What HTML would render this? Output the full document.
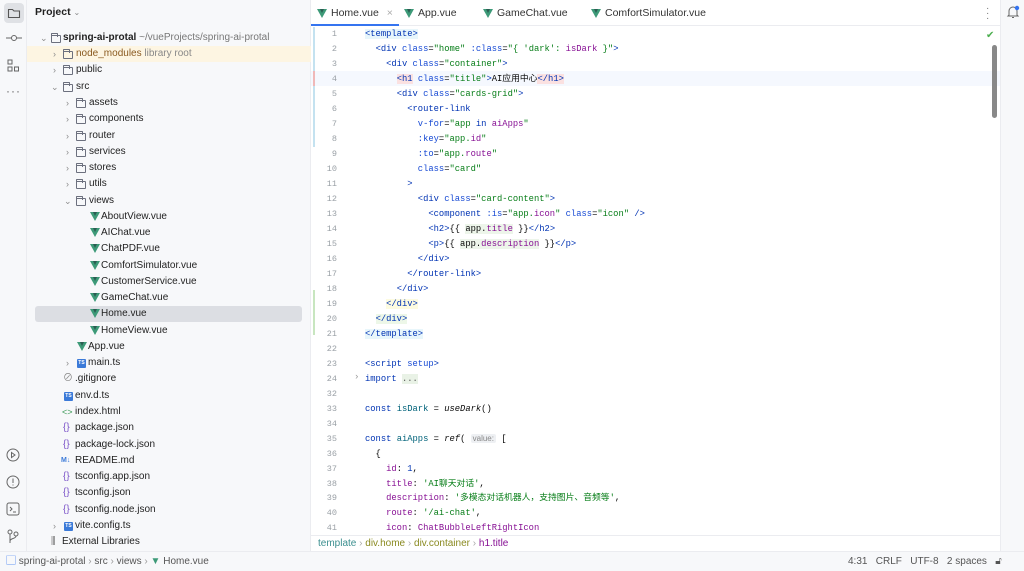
<!DOCTYPE html>
<html><head><meta charset="utf-8"><style>
*{margin:0;padding:0;box-sizing:border-box}
body{width:1024px;height:571px;overflow:hidden;background:#f7f8fa;font-family:"Liberation Sans","Noto Sans CJK SC",sans-serif;font-size:10px;color:#1f1f1f;position:relative}
.abs{position:absolute}
.tb{left:0;top:0;width:27px;height:551px;background:#f7f8fa;border-right:1px solid #ebecf0}
.proj{left:27px;top:0;width:284px;height:551px;background:#f7f8fa;border-right:1px solid #ebecf0}
.row{position:absolute;left:0;width:284px;height:16px;line-height:16px;white-space:nowrap}
.chev{position:absolute;top:0;color:#8c8c8c;font-size:9px}
.fold{position:absolute;top:5px;width:10px;height:8px;border:1px solid #6c707e;border-radius:1px;margin-left:-2px}
.fold:before{content:"";position:absolute;left:-1px;top:-3px;width:5px;height:3px;border:1px solid #6c707e;border-bottom:none;border-radius:1px 1px 0 0}
.vue{position:absolute;top:3px;width:0;height:0;border-left:5px solid transparent;border-right:5px solid transparent;border-top:9px solid #3d9a78}
.vue:after{content:"";position:absolute;left:-2px;top:-9px;border-left:2px solid transparent;border-right:2px solid transparent;border-top:4px solid #2a5d52}
.ts{position:absolute;top:4px;width:9px;height:9px;background:#3b7ad8;border-radius:1px;color:#fff;font-size:5px;line-height:9px;text-align:center;font-weight:bold}
.json{position:absolute;top:0;color:#7d56c9;font-size:10px}
.tx{position:absolute;top:0}
.ed{left:311px;top:0;width:689px;height:551px;background:#fff}
.tabs{left:311px;top:0;width:689px;height:26px;background:#fff;border-bottom:1px solid #ebecf0}
.tab{position:absolute;top:0;height:26px;line-height:26px;font-size:10.5px;color:#333}
.code{font-family:"Liberation Mono","Noto Sans CJK SC",monospace;font-size:8.8px}
.ln{position:absolute;left:311px;width:26px;text-align:right;color:#9aa0a6;font-family:"Liberation Mono",monospace;font-size:8.5px;line-height:12px;height:12px}
.cl{position:absolute;left:365px;white-space:pre;color:#080808;line-height:12px;height:12px}
.t{color:#0033b3}.a{color:#174ad4}.s{color:#067d17}.p{color:#871094}.k{color:#0033b3}
.right{left:1000px;top:0;width:24px;height:551px;background:#f7f8fa;border-left:1px solid #ebecf0}
.status{left:0;top:551px;width:1024px;height:20px;background:#f7f8fa;border-top:1px solid #ebecf0;line-height:19px;color:#555;font-size:10px}
.bc{left:311px;top:535px;width:689px;height:16px;background:#fff;border-top:1px solid #ebecf0;line-height:15px;font-size:10px}
</style></head><body>
<div class="abs tb">
 <div class="abs" style="left:4px;top:3px;width:20px;height:20px;background:#dfe1e5;border-radius:4px"></div>
 <svg class="abs" style="left:7px;top:6px" width="14" height="14" viewBox="0 0 14 14"><path d="M1.5 3.5h4l1.5 1.5h5.5v6.5h-11z" fill="none" stroke="#555" stroke-width="1.1"/></svg>
 <svg class="abs" style="left:6px;top:33px" width="16" height="10"><circle cx="8" cy="5" r="2.5" fill="none" stroke="#666"/><path d="M0 5h5.5M10.5 5h5.5" stroke="#666"/></svg>
 <svg class="abs" style="left:7px;top:59px" width="13" height="14"><rect x="1" y="1" width="4" height="4" fill="none" stroke="#666"/><rect x="1" y="8" width="4" height="4" fill="none" stroke="#666"/><rect x="7.5" y="8" width="4" height="4" fill="none" stroke="#666"/></svg>
 <div class="abs" style="left:6px;top:84px;color:#666;font-size:12px;letter-spacing:1px">···</div>
 <svg class="abs" style="left:6px;top:448px" width="14" height="14"><circle cx="7" cy="7" r="6" fill="none" stroke="#666"/><path d="M5.5 4.5l3.5 2.5-3.5 2.5z" fill="none" stroke="#666"/></svg>
 <svg class="abs" style="left:6px;top:474px" width="14" height="16"><circle cx="7" cy="8" r="6" fill="none" stroke="#666"/><path d="M7 4.5v4.5M7 10.5v1" stroke="#666"/></svg>
 <svg class="abs" style="left:6px;top:502px" width="14" height="14"><rect x="1" y="1" width="12" height="12" rx="2" fill="none" stroke="#666"/><path d="M4 5l2 2-2 2M7 10h3" stroke="#666" fill="none"/></svg>
 <svg class="abs" style="left:6px;top:528px" width="14" height="16"><circle cx="4" cy="4" r="2" fill="none" stroke="#666"/><circle cx="10" cy="6" r="2" fill="none" stroke="#666"/><path d="M4 6v9M10 8c0 3-6 2-6 5" stroke="#666" fill="none"/></svg>
</div>
<div class="abs proj">
 <div class="abs" style="left:8px;top:6px;font-weight:bold;font-size:10.5px">Project <span style="font-weight:normal;color:#888;font-size:8px">⌄</span></div>
 <div class="row" style="top:30px"><span class="chev" style="left:13px">⌄</span><span class="fold" style="left:26px"></span><span class="tx" style="left:36px"><b>spring-ai-protal</b> <span style="color:#777">~/vueProjects/spring-ai-protal</span></span></div>
 <div class="row" style="top:46px;background:#fdf5e2"><span class="chev" style="left:26px">›</span><span class="fold" style="left:38px"></span><span class="tx" style="left:49px;color:#8a5a20">node_modules <span style="color:#888">library root</span></span></div>
 <div class="row" style="top:62px"><span class="chev" style="left:26px">›</span><span class="fold" style="left:38px"></span><span class="tx" style="left:49px">public</span></div>
 <div class="row" style="top:79px"><span class="chev" style="left:24px">⌄</span><span class="fold" style="left:38px"></span><span class="tx" style="left:49px">src</span></div>
 <div class="row" style="top:95px"><span class="chev" style="left:39px">›</span><span class="fold" style="left:51px"></span><span class="tx" style="left:62px">assets</span></div>
 <div class="row" style="top:111px"><span class="chev" style="left:39px">›</span><span class="fold" style="left:51px"></span><span class="tx" style="left:62px">components</span></div>
 <div class="row" style="top:128px"><span class="chev" style="left:39px">›</span><span class="fold" style="left:51px"></span><span class="tx" style="left:62px">router</span></div>
 <div class="row" style="top:144px"><span class="chev" style="left:39px">›</span><span class="fold" style="left:51px"></span><span class="tx" style="left:62px">services</span></div>
 <div class="row" style="top:160px"><span class="chev" style="left:39px">›</span><span class="fold" style="left:51px"></span><span class="tx" style="left:62px">stores</span></div>
 <div class="row" style="top:176px"><span class="chev" style="left:39px">›</span><span class="fold" style="left:51px"></span><span class="tx" style="left:62px">utils</span></div>
 <div class="row" style="top:193px"><span class="chev" style="left:37px">⌄</span><span class="fold" style="left:51px"></span><span class="tx" style="left:62px">views</span></div>
 <div class="row" style="top:209px"><span class="vue" style="left:63px"></span><span class="tx" style="left:74px">AboutView.vue</span></div>
 <div class="row" style="top:225px"><span class="vue" style="left:63px"></span><span class="tx" style="left:74px">AIChat.vue</span></div>
 <div class="row" style="top:241px"><span class="vue" style="left:63px"></span><span class="tx" style="left:74px">ChatPDF.vue</span></div>
 <div class="row" style="top:258px"><span class="vue" style="left:63px"></span><span class="tx" style="left:74px">ComfortSimulator.vue</span></div>
 <div class="row" style="top:274px"><span class="vue" style="left:63px"></span><span class="tx" style="left:74px">CustomerService.vue</span></div>
 <div class="row" style="top:290px"><span class="vue" style="left:63px"></span><span class="tx" style="left:74px">GameChat.vue</span></div>
 <div class="row" style="top:306px;left:8px;width:267px;background:#dcdee3;border-radius:3px"><span class="vue" style="left:55px"></span><span class="tx" style="left:66px">Home.vue</span></div>
 <div class="row" style="top:323px"><span class="vue" style="left:63px"></span><span class="tx" style="left:74px">HomeView.vue</span></div>
 <div class="row" style="top:339px"><span class="vue" style="left:50px"></span><span class="tx" style="left:61px">App.vue</span></div>
 <div class="row" style="top:355px"><span class="chev" style="left:39px">›</span><span class="ts" style="left:50px">TS</span><span class="tx" style="left:61px">main.ts</span></div>
 <div class="row" style="top:371px"><span class="tx" style="left:36px;color:#888">⊘</span><span class="tx" style="left:48px">.gitignore</span></div>
 <div class="row" style="top:388px"><span class="ts" style="left:37px">TS</span><span class="tx" style="left:48px">env.d.ts</span></div>
 <div class="row" style="top:404px"><span class="tx" style="left:35px;color:#3d9a58;font-size:9px">&lt;&gt;</span><span class="tx" style="left:48px">index.html</span></div>
 <div class="row" style="top:420px"><span class="json" style="left:36px">{}</span><span class="tx" style="left:48px">package.json</span></div>
 <div class="row" style="top:437px"><span class="json" style="left:36px">{}</span><span class="tx" style="left:48px">package-lock.json</span></div>
 <div class="row" style="top:453px"><span class="tx" style="left:34px;color:#3b7ad8;font-size:7px;font-weight:bold">M↓</span><span class="tx" style="left:48px">README.md</span></div>
 <div class="row" style="top:469px"><span class="json" style="left:36px">{}</span><span class="tx" style="left:48px">tsconfig.app.json</span></div>
 <div class="row" style="top:485px"><span class="json" style="left:36px">{}</span><span class="tx" style="left:48px">tsconfig.json</span></div>
 <div class="row" style="top:502px"><span class="json" style="left:36px">{}</span><span class="tx" style="left:48px">tsconfig.node.json</span></div>
 <div class="row" style="top:518px"><span class="chev" style="left:26px">›</span><span class="ts" style="left:37px">TS</span><span class="tx" style="left:48px">vite.config.ts</span></div>
 <div class="row" style="top:534px"><span class="tx" style="left:24px;color:#666">⫼</span><span class="tx" style="left:35px">External Libraries</span></div>
</div>
<div class="abs ed"></div>
<div class="abs" style="left:311px;top:71px;width:689px;height:15px;background:#f5f8fe"></div>
<div class="abs tabs">
 <div class="tab" style="left:6px"><span class="vue" style="left:0;top:9px"></span><span style="margin-left:14px">Home.vue</span> <span style="color:#aaa;margin-left:5px">×</span></div>
 <div class="abs" style="left:0;top:24px;width:88px;height:2px;background:#3574f0"></div>
 <div class="tab" style="left:93px"><span class="vue" style="left:0;top:9px"></span><span style="margin-left:14px">App.vue</span></div>
 <div class="tab" style="left:172px"><span class="vue" style="left:0;top:9px"></span><span style="margin-left:14px">GameChat.vue</span></div>
 <div class="tab" style="left:280px"><span class="vue" style="left:0;top:9px"></span><span style="margin-left:14px">ComfortSimulator.vue</span></div>
 <div class="abs" style="left:675px;top:6px;color:#777;font-size:10px;line-height:5px">·<br>·<br>·</div>
</div>
<div class="abs" style="left:313px;top:27px;width:2px;height:120px;background:#c4e2f0"></div>
<div class="abs" style="left:313px;top:71px;width:2px;height:15px;background:#f0b8b8"></div>
<div class="abs" style="left:313px;top:290px;width:2px;height:45px;background:#c8e6c0"></div>
<div class="abs" style="left:986px;top:30px;color:#4caf50;font-size:10px">✔</div>
<div class="abs" style="left:992px;top:45px;width:5px;height:73px;background:#888;border-radius:3px"></div>
<div class="code">
<div class="ln" style="top:28px">1</div><div class="cl" style="top:28px"><span style="background:#e8f6fb"><span class="t">&lt;template&gt;</span></span></div>
<div class="ln" style="top:43px">2</div><div class="cl" style="top:43px">  <span class="t">&lt;div </span><span class="a">class</span>=<span class="s">"home"</span> <span class="a">:class</span>=<span class="s">"{ 'dark': </span><span class="p">isDark</span><span class="s"> }"</span><span class="t">&gt;</span></div>
<div class="ln" style="top:58px">3</div><div class="cl" style="top:58px">    <span class="t">&lt;div </span><span class="a">class</span>=<span class="s">"container"</span><span class="t">&gt;</span></div>
<div class="ln" style="top:73px">4</div><div class="cl" style="top:73px">      <span class="t" style="background:#fbe1e1">&lt;h1</span> <span class="a">class</span>=<span class="s">"title"</span><span class="t">&gt;</span>AI应用中心<span class="t" style="background:#fbe1e1">&lt;/h1&gt;</span></div>
<div class="ln" style="top:88px">5</div><div class="cl" style="top:88px">      <span class="t">&lt;div </span><span class="a">class</span>=<span class="s">"cards-grid"</span><span class="t">&gt;</span></div>
<div class="ln" style="top:103px">6</div><div class="cl" style="top:103px">        <span class="t">&lt;router-link</span></div>
<div class="ln" style="top:118px">7</div><div class="cl" style="top:118px">          <span class="a">v-for</span>=<span class="s">"app </span><span class="k">in</span> <span class="p">aiApps</span><span class="s">"</span></div>
<div class="ln" style="top:133px">8</div><div class="cl" style="top:133px">          <span class="a">:key</span>=<span class="s">"app.</span><span class="p">id</span><span class="s">"</span></div>
<div class="ln" style="top:148px">9</div><div class="cl" style="top:148px">          <span class="a">:to</span>=<span class="s">"app.</span><span class="p">route</span><span class="s">"</span></div>
<div class="ln" style="top:163px">10</div><div class="cl" style="top:163px">          <span class="a">class</span>=<span class="s">"card"</span></div>
<div class="ln" style="top:178px">11</div><div class="cl" style="top:178px">        <span class="t">&gt;</span></div>
<div class="ln" style="top:193px">12</div><div class="cl" style="top:193px">          <span class="t">&lt;div </span><span class="a">class</span>=<span class="s">"card-content"</span><span class="t">&gt;</span></div>
<div class="ln" style="top:208px">13</div><div class="cl" style="top:208px">            <span class="t">&lt;component </span><span class="a">:is</span>=<span class="s">"app.</span><span class="p">icon</span><span class="s">"</span> <span class="a">class</span>=<span class="s">"icon"</span> <span class="t">/&gt;</span></div>
<div class="ln" style="top:223px">14</div><div class="cl" style="top:223px">            <span class="t">&lt;h2&gt;</span>{{ <span style="background:#edf5ea">app.<span class="p">title</span></span> }}<span class="t">&lt;/h2&gt;</span></div>
<div class="ln" style="top:238px">15</div><div class="cl" style="top:238px">            <span class="t">&lt;p&gt;</span>{{ <span style="background:#edf5ea">app.<span class="p">description</span></span> }}<span class="t">&lt;/p&gt;</span></div>
<div class="ln" style="top:253px">16</div><div class="cl" style="top:253px">          <span class="t">&lt;/div&gt;</span></div>
<div class="ln" style="top:268px">17</div><div class="cl" style="top:268px">        <span class="t">&lt;/router-link&gt;</span></div>
<div class="ln" style="top:283px">18</div><div class="cl" style="top:283px">      <span class="t">&lt;/div&gt;</span></div>
<div class="ln" style="top:298px">19</div><div class="cl" style="top:298px">    <span class="t" style="background:#fdfbe0">&lt;/div&gt;</span></div>
<div class="ln" style="top:313px">20</div><div class="cl" style="top:313px">  <span class="t" style="background:#edf7e8">&lt;/div&gt;</span></div>
<div class="ln" style="top:328px">21</div><div class="cl" style="top:328px"><span class="t" style="background:#e8f6fb">&lt;/template&gt;</span></div>
<div class="ln" style="top:343px">22</div>
<div class="ln" style="top:358px">23</div><div class="cl" style="top:358px"><span class="t">&lt;script </span><span class="a">setup</span><span class="t">&gt;</span></div>
<div class="ln" style="top:373px">24</div><div class="cl" style="top:373px"><span class="k">import</span> <span style="background:#e9f2e6;color:#555">...</span></div>
<div class="abs" style="left:354px;top:372px;color:#999;font-size:9px">›</div>
<div class="ln" style="top:388px">32</div>
<div class="ln" style="top:403px">33</div><div class="cl" style="top:403px"><span class="k">const</span> <span style="color:#00627a">isDark</span> = <i>useDark</i>()</div>
<div class="ln" style="top:418px">34</div>
<div class="ln" style="top:433px">35</div><div class="cl" style="top:433px"><span class="k">const</span> <span style="color:#00627a">aiApps</span> = <i>ref</i>( <span style="background:#eef0f3;color:#888;font-family:'Liberation Sans',sans-serif;font-size:8px;padding:0 2px;border-radius:2px">value:</span> [</div>
<div class="ln" style="top:448px">36</div><div class="cl" style="top:448px">  {</div>
<div class="ln" style="top:463px">37</div><div class="cl" style="top:463px">    <span class="p">id</span>: <span class="t">1</span>,</div>
<div class="ln" style="top:478px">38</div><div class="cl" style="top:478px">    <span class="p">title</span>: <span class="s">'AI聊天对话'</span>,</div>
<div class="ln" style="top:492px">39</div><div class="cl" style="top:492px">    <span class="p">description</span>: <span class="s">'多模态对话机器人，支持图片、音频等'</span>,</div>
<div class="ln" style="top:507px">40</div><div class="cl" style="top:507px">    <span class="p">route</span>: <span class="s">'/ai-chat'</span>,</div>
<div class="ln" style="top:522px">41</div><div class="cl" style="top:522px">    <span class="p">icon</span>: <span class="p">ChatBubbleLeftRightIcon</span></div>
</div>
<div class="abs bc"><span style="margin-left:7px;color:#3b8f8f">template</span> <span style="color:#aaa">›</span> <span style="color:#8a8a20">div.home</span> <span style="color:#aaa">›</span> <span style="color:#8a8a20">div.container</span> <span style="color:#aaa">›</span> <span style="color:#871094">h1.title</span></div>
<div class="abs right">
 <svg class="abs" style="left:5px;top:5px" width="14" height="14"><path d="M3 10V6a4 4 0 0 1 8 0v4l1 1H2z M6 12.5h2" fill="none" stroke="#666"/><circle cx="11" cy="3" r="2.2" fill="#3574f0"/></svg>
</div>
<div class="abs status"><span style="margin-left:6px;color:#3574f0">▢</span> spring-ai-protal <span style="color:#999">›</span> src <span style="color:#999">›</span> views <span style="color:#999">›</span> <span style="color:#3d9a78">▼</span> Home.vue
 <span class="abs" style="left:848px;top:0">4:31&nbsp;&nbsp;&nbsp;CRLF&nbsp;&nbsp;&nbsp;UTF-8&nbsp;&nbsp;&nbsp;2 spaces&nbsp;&nbsp;&nbsp;🔓︎</span></div>
</body></html>
